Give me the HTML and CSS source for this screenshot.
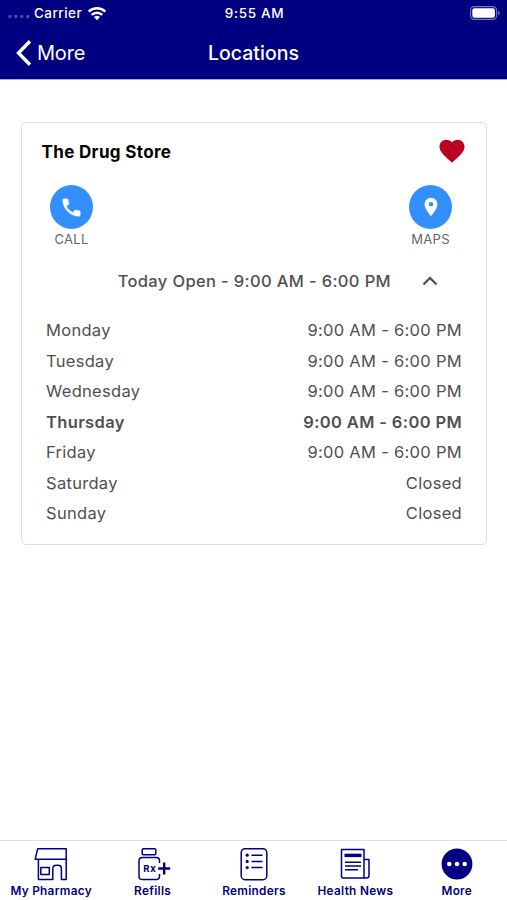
FILE: index.html
```html
<!DOCTYPE html>
<html lang="en">
<head>
<meta charset="utf-8">
<title>Locations</title>
<link rel="stylesheet" href="styles.css">
</head>
<body>
<div class="app">
  <header class="header">
    <div class="status">
      <div class="carrier">
        <svg class="signal" width="22" height="5" viewBox="0 0 22 5"><circle cx="2" cy="2.5" r="1.7"/><circle cx="7.9" cy="2.5" r="1.7"/><circle cx="13.8" cy="2.5" r="1.7"/><circle cx="19.7" cy="2.5" r="1.7"/></svg>
        <span class="carrier-name">Carrier</span>
        <svg class="wifi" width="20" height="15" viewBox="0 0 20 15"><path d="M1.7 5.6a12 12 0 0 1 16.600 0M4.700 8.800a7.600 7.600 0 0 1 10.600 0" fill="none" stroke="#fff" stroke-width="2.500"/><path d="M10 14.200l-3-3.100a4.300 4.300 0 0 1 6 0z" fill="#fff"/></svg>
      </div>
      <span class="time">9:55 AM</span>
      <svg class="battery" width="31" height="14" viewBox="0 0 31 14"><rect x=".6" y=".6" width="26" height="12.800" rx="3.600" fill="none" stroke="#7777bd" stroke-width="1.100"/><rect x="2.300" y="2.300" width="22.600" height="9.400" rx="2" fill="#fff"/><path d="M28.200 4.700c2 .7 2 3.900 0 4.600z" fill="#7777bd"/></svg>
    </div>
    <nav class="navbar">
      <a class="back">
        <svg width="17" height="26" viewBox="0 0 17 26"><path d="M15 1.200L3.500 13l11.500 11.800" fill="none" stroke="#fff" stroke-width="3.400"/></svg>
        <span>More</span>
      </a>
      <h1 class="title">Locations</h1>
    </nav>
  </header>

  <main class="content">
    <section class="card">
      <div class="card-head">
        <h2 class="store">The Drug Store</h2>
        <svg class="heart" width="30" height="30" viewBox="0 0 24 24"><path fill="#b90020" d="M12 21.350l-1.450-1.320C5.400 15.360 2 12.280 2 8.500 2 5.420 4.420 3 7.500 3c1.740 0 3.410.81 4.500 2.090C13.090 3.810 14.760 3 16.500 3 19.580 3 22 5.420 22 8.500c0 3.780-3.400 6.860-8.550 11.540L12 21.350z"/></svg>
      </div>
      <div class="actions">
        <a class="action">
          <span class="disc"><svg width="23" height="23" viewBox="0 0 24 24"><path fill="#fff" stroke="#fff" stroke-width=".7" stroke-linejoin="round" d="M6.620 10.790c1.440 2.830 3.760 5.140 6.590 6.590l2.200-2.200c.27-.27.67-.36 1.020-.24 1.120.37 2.330.57 3.570.57.55 0 1 .45 1 1V20c0 .55-.45 1-1 1-9.390 0-17-7.610-17-17 0-.55.45-1 1-1h3.500c.55 0 1 .45 1 1 0 1.250.2 2.450.57 3.570.11.35.03.74-.25 1.020l-2.200 2.200z"/></svg></span>
          <span class="action-label">CALL</span>
        </a>
        <a class="action">
          <span class="disc"><svg width="22" height="22" viewBox="0 0 24 24"><path fill="#fff" d="M12 2C8.130 2 5 5.130 5 9c0 5.250 7 13 7 13s7-7.750 7-13c0-3.870-3.130-7-7-7zm0 9.500a2.500 2.500 0 0 1 0-5 2.500 2.500 0 0 1 0 5z"/></svg></span>
          <span class="action-label">MAPS</span>
        </a>
      </div>
      <div class="today">
        <span class="today-text">Today Open - 9:00 AM - 6:00 PM</span>
        <svg width="16" height="10" viewBox="0 0 16 10"><path d="M1.500 8.500L8 2l6.500 6.500" fill="none" stroke="#555" stroke-width="2.300"/></svg>
      </div>
      <ul class="hours">
        <li><span>Monday</span><span>9:00 AM - 6:00 PM</span></li>
        <li><span>Tuesday</span><span>9:00 AM - 6:00 PM</span></li>
        <li><span>Wednesday</span><span>9:00 AM - 6:00 PM</span></li>
        <li class="current"><span>Thursday</span><span>9:00 AM - 6:00 PM</span></li>
        <li><span>Friday</span><span>9:00 AM - 6:00 PM</span></li>
        <li><span>Saturday</span><span>Closed</span></li>
        <li><span>Sunday</span><span>Closed</span></li>
      </ul>
    </section>
  </main>

  <footer class="tabs">
    <a class="tab">
      <svg width="36" height="36" viewBox="0 0 36 36"><g class="line"><path d="M4.700 2.700H33.200V13.200H2.200zM5.400 13.200V33.600H19.800V22.700q0-3.500 3.500-3.500h1.600q3.500 0 3.500 3.500V33.600H33.200V13.200"/><rect x="7.800" y="21.500" width="8.500" height="7"/></g></svg>
      <span>My Pharmacy</span>
    </a>
    <a class="tab">
      <svg width="36" height="36" viewBox="0 0 36 36"><g class="line"><rect x="7.200" y="2.700" width="13.600" height="6" rx="1.200"/><path d="M24.500 17v-2.200q0-3.300-3.300-3.300H7.300Q4 11.500 4 14.800V30.300q0 3.300 3.300 3.300H21.200q3.300 0 3.300-3.300V28"/></g><path d="M29.200 16.500v12M23.200 22.500h12" fill="none" stroke="#000080" stroke-width="2.400"/><text class="rx" x="8.200" y="25.600" textLength="12.500">Rx</text></svg>
      <span>Refills</span>
    </a>
    <a class="tab">
      <svg width="36" height="36" viewBox="0 0 36 36"><g class="line"><rect x="5.200" y="2.700" width="25.600" height="31" rx="4"/><path d="M15.500 9.200h11M15.500 15.400h11M15.500 21.600h11"/></g><g fill="#000080"><circle cx="11.200" cy="9.200" r="1.600"/><circle cx="11.200" cy="15.400" r="1.600"/><circle cx="11.200" cy="21.600" r="1.600"/></g></svg>
      <span>Reminders</span>
    </a>
    <a class="tab">
      <svg width="36" height="36" viewBox="0 0 36 36"><g class="line"><path d="M27 31.700V3.500H4.500V30q0 2 2 2H29.500q2.500 0 2.500-2.500V13.500H27"/><path d="M8 16.200h16M8 20h16M8 23.800h13"/></g><path d="M7.500 9.400h17" fill="none" stroke="#000080" stroke-width="3.400"/></svg>
      <span>Health News</span>
    </a>
    <a class="tab">
      <svg width="36" height="36" viewBox="0 0 36 36"><circle cx="18" cy="18" r="15.400" fill="#000080"/><g fill="#fff"><circle cx="10.300" cy="18" r="2.300"/><circle cx="18" cy="18" r="2.300"/><circle cx="25.700" cy="18" r="2.300"/></g></svg>
      <span>More</span>
    </a>
  </footer>
</div>
</body>
</html>
```
FILE: styles.css
```css
* { box-sizing: border-box; }
body {
  margin: 0;
  background: #fff;
  font-family: Inter, "Liberation Sans", sans-serif;
  color: #505050;
}
h1, h2, ul { margin: 0; padding: 0; }
.app { display: flex; flex-direction: column; height: 900px; }

.header {
  height: 80px;
  background: #000080;
  border-bottom: 1px solid #a6a6e6;
  color: #fff;
}
.status, .navbar {
  display: grid;
  grid-template-columns: 1fr auto 1fr;
  align-items: center;
}
.status { height: 26px; padding: 0 6px 0 8px; font-size: 13.5px; font-weight: 500; letter-spacing: .45px; }
.time { letter-spacing: .65px; }
.carrier { display: flex; align-items: center; }
.signal { fill: #4b4ba6; margin-top: 7px; }
.carrier-name { margin-left: 4px; }
.wifi { margin-left: 5px; }
.battery { justify-self: end; }
.navbar { height: 53px; padding: 0 15px; }
.back { display: flex; align-items: center; gap: 5px; font-size: 20px; letter-spacing: -.2px; }
.title { font-size: 19.5px; font-weight: 500; letter-spacing: 0; }

.content { flex: 1; padding: 42px 20px 0 21px; }
.card {
  height: 423px;
  border: 1px solid #ddd;
  border-radius: 5px;
  padding: 0 20px;
}
.card-head { display: flex; justify-content: space-between; align-items: center; height: 58px; }
.store { font-size: 17px; font-weight: 650; color: #000; letter-spacing: .35px; margin-left: -.5px; }
.heart { margin: -2px -1px 0 0; }
.actions { display: flex; justify-content: space-between; padding: 4px 14px 0 8px; }
.action { display: flex; flex-direction: column; align-items: center; width: 43px; }
.disc {
  display: flex;
  align-items: center;
  justify-content: center;
  width: 43px;
  height: 44px;
  border-radius: 50%;
  background: #338ffc;
}
.action-label { margin-top: 1px; font-size: 13px; line-height: 18px; color: #666; letter-spacing: .3px; }
.today { display: flex; justify-content: flex-end; align-items: center; height: 30px; margin-top: 18px; padding-right: 28px; gap: 31px; font-size: 16.5px; font-weight: 500; }
.today-text { white-space: nowrap; letter-spacing: .36px; }
.hours { list-style: none; margin-top: 19px; padding: 0 4px; font-size: 16.5px; letter-spacing: .3px; }
.hours li { display: flex; justify-content: space-between; align-items: center; height: 30.5px; }
.hours .current { font-weight: 600; letter-spacing: .36px; }

.tabs {
  display: grid;
  grid-template-columns: repeat(5, 1fr);
  height: 60px;
  border-top: 1px solid #ddd;
}
.tab { display: flex; flex-direction: column; align-items: center; padding: 5px 0 0 1px; color: #000080; font-size: 11.8px; line-height: 18px; font-weight: 600; letter-spacing: .3px; white-space: nowrap; }
.line { fill: none; stroke: #000080; stroke-width: 1.5; stroke-linejoin: round; }
.rx { font: 700 9.5px Inter, sans-serif; fill: #000080; letter-spacing: 0; }
```
